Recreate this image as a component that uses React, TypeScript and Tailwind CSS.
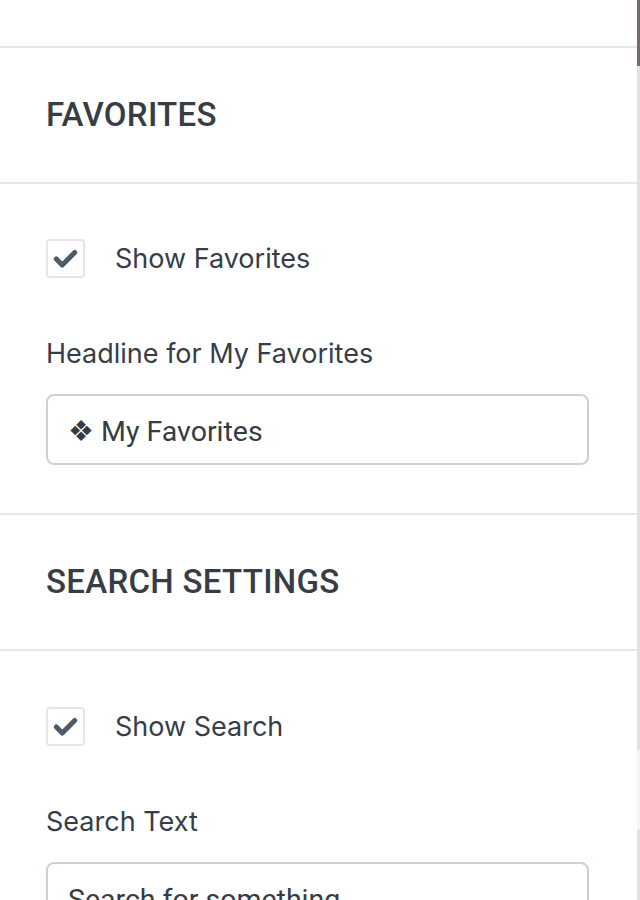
import React from "react";

const CheckIcon = () => (
  <svg width="38" height="38" viewBox="0 0 38 38" fill="none">
    <path
      d="M9 19 L15.5 25.5 L29 12"
      stroke="#4d5b69"
      strokeWidth="5.5"
      strokeLinecap="round"
      strokeLinejoin="round"
    />
  </svg>
);

const SectionHeader = ({ title }: { title: string }) => (
  <div className="flex h-[136px] items-center border-b-2 border-[#e6e9ec] px-[46px]">
    <h2 className="font-['Roboto',sans-serif] text-[33px] font-medium leading-[40px] tracking-[0.3px] text-[#363d45]">
      {title}
    </h2>
  </div>
);

const CheckRow = ({ label }: { label: string }) => (
  <label className="flex items-center gap-[30px]">
    <span className="flex h-[39px] w-[39px] items-center justify-center rounded-[4px] border-2 border-[#e3e6ea] bg-white">
      <CheckIcon />
    </span>
    <span className="font-['Inter',sans-serif] text-[27px] leading-[38px] text-[#353e48]">{label}</span>
  </label>
);

const TextField = ({ label, value }: { label: string; value: string }) => (
  <div className="mt-[58px]">
    <div className="font-['Inter',sans-serif] text-[27px] leading-[36px] text-[#353e48]">{label}</div>
    <div className="mt-[22px] flex h-[71px] w-[543px] items-center rounded-[8px] border-2 border-[#c9d1db] bg-white px-[20px] pt-[4px]">
      <span className="font-['Roboto',sans-serif] text-[28.5px] leading-[36px] text-[#343c44]">{value}</span>
    </div>
  </div>
);

export default function App() {
  return (
    <div className="flex h-[900px] w-[640px] overflow-hidden bg-white">
      <div className="flex-1">
        <div className="h-[48px] border-b-2 border-[#e6e9ec]" />

        <SectionHeader title="FAVORITES" />
        <div className="border-b-2 border-[#e6e9ec] px-[46px] pb-[48px] pt-[55px]">
          <CheckRow label="Show Favorites" />
          <TextField label="Headline for My Favorites" value="❖ My Favorites" />
        </div>

        <SectionHeader title="SEARCH SETTINGS" />
        <div className="px-[46px] pt-[56px]">
          <CheckRow label="Show Search" />
          <TextField label="Search Text" value="Search for something" />
        </div>
      </div>

      <div className="flex w-[3px] flex-col">
        <div className="h-[66px] bg-[#7b6a63]" />
        <div className="h-[684px] bg-[#e4e0da]" />
        <div className="h-[80px] bg-[#f6f5f4]" />
        <div className="flex-1 bg-[#e4e0da]" />
      </div>
    </div>
  );
}
